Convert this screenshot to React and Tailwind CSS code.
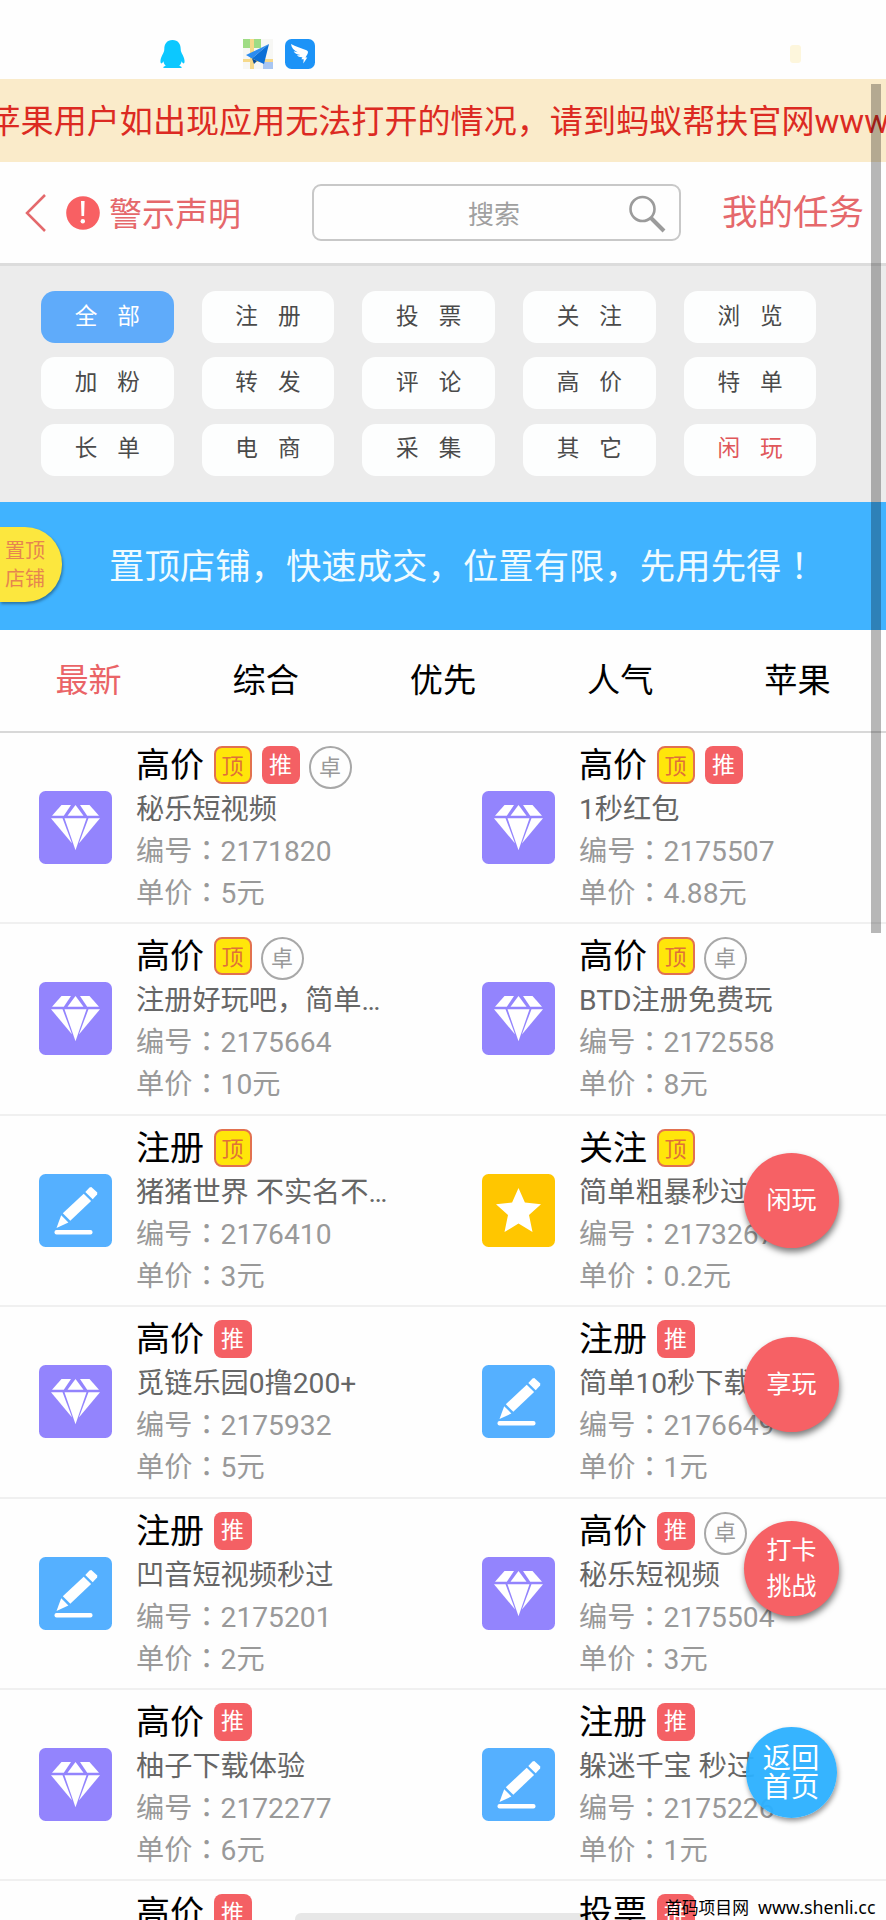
const PAGE_FONT = "font-[Roboto,'Noto_Sans_CJK_SC',sans-serif]";

const categories = [
  '全部', '注册', '投票', '关注', '浏览',
  '加粉', '转发', '评论', '高价', '特单',
  '长单', '电商', '采集', '其它', '闲玩',
];

const tabs = ['最新', '综合', '优先', '人气', '苹果'];

const rows = [
  [
    { kind: 'gem', type: '高价', badges: ['顶', '推', '卓'], name: '秘乐短视频', id: '2171820', price: '5元' },
    { kind: 'gem', type: '高价', badges: ['顶', '推'], name: '1秒红包', id: '2175507', price: '4.88元' },
  ],
  [
    { kind: 'gem', type: '高价', badges: ['顶', '卓'], name: '注册好玩吧，简单…', id: '2175664', price: '10元' },
    { kind: 'gem', type: '高价', badges: ['顶', '卓'], name: 'BTD注册免费玩', id: '2172558', price: '8元' },
  ],
  [
    { kind: 'pen', type: '注册', badges: ['顶'], name: '猪猪世界 不实名不…', id: '2176410', price: '3元' },
    { kind: 'star', type: '关注', badges: ['顶'], name: '简单粗暴秒过', id: '2173267', price: '0.2元' },
  ],
  [
    { kind: 'gem', type: '高价', badges: ['推'], name: '觅链乐园0撸200+', id: '2175932', price: '5元' },
    { kind: 'pen', type: '注册', badges: ['推'], name: '简单10秒下载', id: '2176649', price: '1元' },
  ],
  [
    { kind: 'pen', type: '注册', badges: ['推'], name: '凹音短视频秒过', id: '2175201', price: '2元' },
    { kind: 'gem', type: '高价', badges: ['推', '卓'], name: '秘乐短视频', id: '2175504', price: '3元' },
  ],
  [
    { kind: 'gem', type: '高价', badges: ['推'], name: '柚子下载体验', id: '2172277', price: '6元' },
    { kind: 'pen', type: '注册', badges: ['推'], name: '躲迷千宝 秒过', id: '2175226', price: '1元' },
  ],
  [
    { kind: 'gem', type: '高价', badges: ['推'], name: '', id: '', price: '' },
    { kind: 'gem', type: '投票', badges: ['推'], name: '', id: '', price: '' },
  ],
];

/* Full-width punctuation centred in its em box */
function Mid({ children }) {
  return (
    <span lang="zh-TW" className="font-['Noto_Sans_CJK_TC'] leading-none">
      {children}
    </span>
  );
}

function StatusBar() {
  return (
    <div className="flex h-[79px] items-start pt-[39px] pl-[160px]">
      <svg className="mt-px h-[29px] w-[25px]" viewBox="0 0 25 29">
        <path
          d="M12.5 0C6.8 0 4.3 4 4.3 9c0 2.500-.8 3.600-2 6C.6 18.300-.2 22 1 23.300c.8.500 1.800-.800 2.400-2 .3 1.900 1 3.200 2.300 4.500-1.600.6-2.500 1.200-2.300 2.200h18.200c.2-1-.7-1.600-2.300-2.200 1.300-1.300 2-2.600 2.300-4.500.6 1.200 1.600 2.500 2.400 2 1.200-1.300.4-5-1.300-8.300-1.200-2.400-2-3.500-2-6 0-5-2.500-9-8.200-9z"
          fill="#0cc8ff"
        />
      </svg>
      <svg className="ml-[58px] h-[30px] w-[30px]" viewBox="0 0 30 30">
        <rect width="30" height="30" fill="#f7f7f4" />
        <rect width="18" height="9" fill="#9fdc85" />
        <rect x="20" y="21" width="10" height="9" fill="#a9c6f2" />
        <path d="M7 0h4v30H7z M0 20h30v3H0z" fill="#f6d98a" />
        <path d="M26 5 3 16l6 3.500z" fill="#2b8cf0" />
        <path d="M26 5 9 19.500 21 25z" fill="#0c6fd6" />
        <path d="m9 19.500 2 5.500 3-3z" fill="#0a4a94" />
      </svg>
      <svg className="ml-[12px] h-[30px] w-[30px]" viewBox="0 0 30 30">
        <rect width="30" height="30" rx="6.500" fill="#1c93f7" />
        <path d="M6 5c4.500 2.500 10 4.300 15.500 6.300 1.800.8 1.800 2 1 3.700l-2 3.400h1.800L18.300 24.500l.4-4.200h-2.300l1-2c-2.400.2-4.300-.5-5.600-2.200 1.300.3 2.500.2 3.500 0-3.300-.5-5.600-1.700-6.600-3.800 1.200.5 2.500.8 4 .9C9 11.500 6.500 9 6 5z" fill="#fff" />
      </svg>
      <div className="mt-[6px] ml-[475px] h-[18px] w-[11px] rounded-[3px] bg-[#fdf6dc]" />
    </div>
  );
}

function Header() {
  return (
    <header className="flex h-[104px] items-center border-b-3 border-[#dcdcdc] text-[#e5686b]">
      <svg className="ml-[24px] h-[40px] w-[24px] shrink-0" viewBox="0 0 24 40">
        <path d="M21 2 3 20l18 18" fill="none" stroke="#e4696c" strokeWidth="2.500" />
      </svg>
      <svg className="ml-[18px] h-[34px] w-[34px] shrink-0" viewBox="0 0 34 34">
        <circle cx="17" cy="17" r="16.800" fill="#f86063" />
        <path d="M15 5h3.600l-.5 15h-2.600z" fill="#fff" />
        <circle cx="16.800" cy="25.300" r="2.200" fill="#fff" />
      </svg>
      <span className="ml-[9px] w-[133px] shrink-0 pt-[3px] text-[33px] leading-none whitespace-nowrap">警示声明</span>
      <div className="ml-[70px] flex h-[57px] w-[369px] shrink-0 items-center rounded-[9px] border-2 border-[#c8c8c8]">
        <span className="ml-[154px] pt-[4px] text-[26px] leading-none text-[#a0a0a0]">搜索</span>
        <svg className="ml-[107px] h-[42px] w-[42px]" viewBox="0 0 42 42">
          <circle cx="15.500" cy="17" r="12" fill="none" stroke="#9b9b9b" strokeWidth="2.600" />
          <path d="m24 26 13 13" stroke="#9b9b9b" strokeWidth="4" />
        </svg>
      </div>
      <span className="ml-[41px] pt-[3px] text-[35.500px] leading-none whitespace-nowrap">我的任务</span>
    </header>
  );
}

function Categories() {
  return (
    <nav className="grid h-[236px] grid-cols-[repeat(5,132.500px)] content-start gap-x-[28.200px] gap-y-[14.300px] bg-[#ececec] pt-[25px] pl-[41px]">
      {categories.map((label, i) => {
        const tone =
          i === 0 ? 'bg-[#5fabfa] text-white' : i === 14 ? 'bg-[#fdfefe] text-[#e0575a]' : 'bg-[#fdfefe] text-[#4a4a4a]';
        return (
          <div
            key={label}
            className={`flex h-[52px] items-center justify-center gap-[20px] rounded-[14px] text-[22.600px] leading-none ${tone}`}
          >
            <span>{label[0]}</span>
            <span>{label[1]}</span>
          </div>
        );
      })}
    </nav>
  );
}

function Banner() {
  return (
    <div className="relative flex h-[128px] items-center bg-[#40b3ff] pl-[109px]">
      <p className="text-[35.400px] leading-none whitespace-nowrap text-[#f0fbff]">
        置顶店铺，快速成交，位置有限，先用先得<Mid>！</Mid>
      </p>
      <div className="absolute top-[25px] left-0 flex h-[75px] w-[62px] flex-col justify-center rounded-r-[37px] bg-[#fce73e] pt-px pl-[5px] text-[20px] leading-[28.500px] text-[#e6854f] shadow-[1px_2px_3px_rgba(0,0,0,0.35)]">
        <span>置顶</span>
        <span>店铺</span>
      </div>
    </div>
  );
}

function Tabs() {
  return (
    <div className="grid h-[103px] grid-cols-5 border-b-2 border-[#d8d8d8] pt-px text-center text-[33.200px] leading-[100px] text-black">
      {tabs.map((t, i) => (
        <span key={t} className={i === 0 ? 'text-[#ea6467]' : ''}>
          {t}
        </span>
      ))}
    </div>
  );
}

function KindIcon({ kind }) {
  if (kind === 'pen') {
    return (
      <svg className="h-[73px] w-[73px] shrink-0" viewBox="0 0 73 73">
        <rect width="73" height="73" rx="6.500" fill="#55b0ff" />
        <g fill="#fff">
          <path d="m50.500 13.500 1.800-.5 6 5.600-.2 2-4.400 4.600-7.400-7.200z" />
          <path d="m44.700 19.700 7.400 7.200L31.300 46.800l-7.500-7.500z" />
          <path d="m22.200 41.200 7.200 7.300-11.900 5.600z" />
          <rect x="15.500" y="56" width="38" height="4.500" rx="2" />
        </g>
      </svg>
    );
  }
  if (kind === 'star') {
    return (
      <svg className="h-[73px] w-[73px] shrink-0" viewBox="0 0 73 73">
        <rect width="73" height="73" rx="6.500" fill="#ffc600" />
        <path d="m36.500 14 6.400 14.600 16.100 1.700-12 10.800 3.500 16.900-14-8.400-14 8.400L26 41.100 14 30.300l16.100-1.700z" fill="#fff" />
      </svg>
    );
  }
  return (
    <svg className="h-[73px] w-[73px] shrink-0" viewBox="0 0 73 73">
      <rect width="73" height="73" rx="6.500" fill="#9384fd" />
      <g fill="#fff">
        <path d="M22.500 14h9.500L24.800 24.800H13z" />
        <path d="M50.500 14H41l7.200 10.800H60z" />
        <path d="M36.500 14 44.500 24.800h-16z" />
        <path d="M12 27.200h11.500l9.600 25.300z" />
        <path d="M61 27.200H49.500l-9.600 25.300z" />
        <path d="M25.500 27.200h22L36.500 59.300z" />
      </g>
    </svg>
  );
}

function Badge({ label }) {
  if (label === '顶') {
    return (
      <span className="flex h-[38px] w-[38px] items-center justify-center rounded-[8px] border-2 border-[#e2714f] bg-[#ffe60a] pt-[4px] text-[22px] leading-none text-[#e07038]">
        顶
      </span>
    );
  }
  if (label === '推') {
    return (
      <span className="flex h-[38px] w-[38px] items-center justify-center rounded-[8px] bg-[#f46064] text-[23px] leading-none text-white">
        推
      </span>
    );
  }
  return (
    <span className="-ml-px flex h-[43px] w-[43px] items-center justify-center rounded-full border-2 border-[#a8a8a8] text-[22px] leading-none text-[#999999]">
      卓
    </span>
  );
}

function Task({ kind, type, badges, name, id, price }) {
  return (
    <div className="flex w-[443px] pl-[38.500px]">
      <div className="pt-[58px]">
        <KindIcon kind={kind} />
      </div>
      <div className="ml-[24.500px] pt-[9px] text-[28.200px] whitespace-nowrap">
        <div className="flex h-[47px] items-start">
          <span className="w-[68px] text-[34px] leading-[46px] text-black">{type}</span>
          <div className="ml-[9.500px] flex gap-[10px] pt-[4px]">
            {badges.map((b) => (
              <Badge key={b} label={b} />
            ))}
          </div>
        </div>
        <p className="h-[42px] leading-[42px] text-[#666666]">{name}</p>
        {id && (
          <>
            <p className="h-[42px] leading-[42px] text-[#999999]">
              编号<Mid>：</Mid>
              {id}
            </p>
            <p className="h-[42px] leading-[42px] text-[#999999]">
              单价<Mid>：</Mid>
              {price}
            </p>
          </>
        )}
      </div>
    </div>
  );
}

function FloatButton({ className, lines }) {
  return (
    <div
      className={`absolute left-[744px] flex h-[95px] w-[95px] flex-col items-center justify-center rounded-full bg-[#f66165] text-[25px] leading-[35.700px] text-white shadow-[1px_4px_6px_rgba(0,0,0,0.5)] ${className}`}
    >
      {lines.map((l) => (
        <span key={l}>{l}</span>
      ))}
    </div>
  );
}

export default function App() {
  return (
    <main lang="zh-CN" className={`relative h-[1920px] w-[886px] overflow-hidden bg-[#fefefe] ${PAGE_FONT}`}>
      <StatusBar />
      <div className="h-[83px] overflow-hidden bg-[#faebca]">
        <p className="-ml-[12.500px] text-[33.100px] leading-[85px] whitespace-nowrap text-[#dc2a22]">
          苹果用户如出现应用无法打开的情况，请到蚂蚁帮扶官网www
        </p>
      </div>
      <Header />
      <Categories />
      <Banner />
      <Tabs />
      {rows.map((pair, i) => (
        <section key={i} className="flex h-[191.400px] border-b-2 border-[#f0f0f0]">
          {pair.map((t, j) => (
            <Task key={j} {...t} />
          ))}
        </section>
      ))}

      <FloatButton className="top-[1153px]" lines={['闲玩']} />
      <FloatButton className="top-[1337px]" lines={['享玩']} />
      <FloatButton className="top-[1521px]" lines={['打卡', '挑战']} />
      <div className="absolute top-[1727px] left-[746px] flex h-[91px] w-[91px] flex-col items-center justify-center rounded-full bg-[#2bb0ff]/95 pt-px pr-px text-[28.300px] leading-[29.500px] text-white shadow-[1px_3px_5px_rgba(0,0,0,0.4)]">
        <span>返回</span>
        <span>首页</span>
      </div>

      <div className="absolute top-[84px] left-[871px] h-[849px] w-[10px] bg-black/28" />
      <div className="absolute top-[1913px] left-[295px] h-[12px] w-[296px] rounded-full bg-black/9" />
      <p className="absolute top-[1895px] left-[665px] flex items-baseline gap-[9px] font-['Noto_Sans','Noto_Sans_CJK_SC',sans-serif] text-[16.800px] leading-[24px] text-black">
        <span>首码项目网</span>
        <span className="text-[17.800px]">www.shenli.cc</span>
      </p>
    </main>
  );
}
